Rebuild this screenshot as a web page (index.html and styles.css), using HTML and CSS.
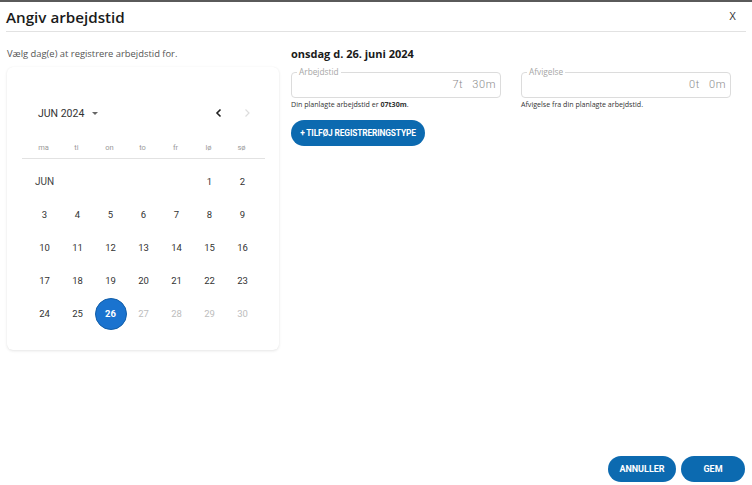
FILE: index.html
```html
<!DOCTYPE html>
<html lang="da">
<head>
<meta charset="utf-8">
<title>Angiv arbejdstid</title>
<link rel="stylesheet" href="styles.css">
</head>
<body>
<div class="dialog">
  <header class="dlg-head">
    <h1 class="title">Angiv arbejdstid</h1>
    <span class="close">X</span>
  </header>
  <main class="content">
    <section class="left">
      <p class="hint">Vælg dag(e) at registrere arbejdstid for.</p>
      <div class="card">
        <div class="cal-head">
          <div class="month">JUN 2024 <span class="caret"></span></div>
          <div class="navs">
            <svg class="nav" width="10" height="10" viewBox="0 0 10 10"><path d="M6.5 1.5 L3 5 L6.5 8.5" fill="none" stroke="#222" stroke-width="1.6"/></svg>
            <svg class="nav" width="10" height="10" viewBox="0 0 10 10"><path d="M3.5 1.5 L7 5 L3.5 8.5" fill="none" stroke="#ddd" stroke-width="1.2"/></svg>
          </div>
        </div>
        <div class="weekdays">
          <span>ma</span><span>ti</span><span>on</span><span>to</span><span>fr</span><span>lø</span><span>sø</span>
        </div>
        <div class="days">
          <span class="mlabel">JUN</span><span></span><span></span><span></span><span></span><span>1</span><span>2</span>
          <span>3</span><span>4</span><span>5</span><span>6</span><span>7</span><span>8</span><span>9</span>
          <span>10</span><span>11</span><span>12</span><span>13</span><span>14</span><span>15</span><span>16</span>
          <span>17</span><span>18</span><span>19</span><span>20</span><span>21</span><span>22</span><span>23</span>
          <span>24</span><span>25</span><span class="sel"><b>26</b></span><span class="dis">27</span><span class="dis">28</span><span class="dis">29</span><span class="dis">30</span>
        </div>
      </div>
    </section>
    <section class="right">
      <h2 class="date">onsdag d. 26. juni 2024</h2>
      <div class="fields">
        <div class="fieldwrap">
          <fieldset class="field">
            <legend>Arbejdstid</legend>
            <span class="val">7t</span><span class="val">30m</span>
          </fieldset>
          <p class="help">Din planlagte arbejdstid er <b>07t30m</b>.</p>
        </div>
        <div class="fieldwrap">
          <fieldset class="field">
            <legend>Afvigelse</legend>
            <span class="val">0t</span><span class="val">0m</span>
          </fieldset>
          <p class="help">Afvigelse fra din planlagte arbejdstid.</p>
        </div>
      </div>
      <button class="btn add">+ TILFØJ REGISTRERINGSTYPE</button>
    </section>
  </main>
  <footer class="actions">
    <button class="btn act cancel">ANNULLER</button>
    <button class="btn act save">GEM</button>
  </footer>
</div>
</body>
</html>
```
FILE: styles.css
```css
html, body { margin: 0; padding: 0; }
body {
  font-family: "Open Sans", "Liberation Sans", sans-serif;
  background: #fff;
  color: #222;
}
.dialog {
  height: 485px;
  box-sizing: border-box;
  border-top: 2px solid #5a5a5a;
  display: flex;
  flex-direction: column;
}
.dlg-head {
  margin: 0 6px 0 6px;
  height: 29px;
  border-bottom: 1px solid #e2e2e2;
  display: flex;
  align-items: center;
  justify-content: space-between;
}
.title {
  margin: 0;
  font-size: 15.2px;
  font-weight: 600;
  color: #1a1a1a;
}
.close {
  font-family: "Liberation Sans", sans-serif;
  font-size: 10px;
  color: #333;
  margin-right: 10px;
}
.content {
  flex: 1;
  display: flex;
  padding: 0 7px;
}
.left { width: 272px; }
.hint {
  margin: 16px 0 0 0;
  font-size: 9.4px;
  line-height: 12px;
  color: #555;
}
.card {
  margin-top: 7px;
  height: 283px;
  box-sizing: border-box;
  border-radius: 6px;
  box-shadow: 0 1px 3px rgba(0,0,0,0.10), 0 0 1px rgba(0,0,0,0.06);
  padding: 38px 14px 0 16px;
  font-family: Roboto, "Liberation Sans", sans-serif;
}
.cal-head {
  display: flex;
  justify-content: space-between;
  align-items: center;
  height: 16px;
  padding: 0 13px 0 15px;
}
.month {
  font-size: 10.5px;
  color: #333;
  display: flex;
  align-items: center;
  gap: 6px;
}
.caret {
  width: 0; height: 0;
  border-left: 3.5px solid transparent;
  border-right: 3.5px solid transparent;
  border-top: 3.5px solid #666;
  margin-left: 2px;
}
.navs { display: flex; gap: 18px; }
.nav { display: block; }
.weekdays {
  margin-top: 21px;
  display: grid;
  grid-template-columns: repeat(7, 33px);
  padding: 0 0 0 5px;
  margin-left: -1px;
  height: 12px;
  font-size: 7.5px;
  color: #9a9a9a;
  text-align: center;
  line-height: 12px;
}
.days {
  border-top: 1px solid #e2e2e2;
  margin-top: 4px;
  margin-left: -1px;
  padding: 6px 0 0 6px;
  display: grid;
  grid-template-columns: repeat(7, 33px);
  grid-auto-rows: 33px;
  font-size: 9.5px;
  color: #333;
  text-align: center;
}
.days span {
  display: flex;
  align-items: center;
  justify-content: center;
}
.days .mlabel { font-size: 10px; color: #444; }
.days .dis { color: #bdbdbd; }
.days .sel b {
  width: 30px; height: 30px;
  border-radius: 50%;
  background: #1a73cf;
  border: 1.5px solid #125ea8;
  color: #fff;
  font-weight: 700;
  display: flex;
  align-items: center;
  justify-content: center;
}
.right { margin-left: 12px; flex: 1; }
.date {
  margin: 14px 0 0 0;
  font-size: 11px;
  font-weight: 700;
  color: #1a1a1a;
  line-height: 16px;
}
.fields { display: flex; gap: 20px; margin-top: 5px; }
.fieldwrap { width: 210px; }
.field {
  margin: 0;
  height: 31px;
  box-sizing: border-box;
  border: 1px solid #dcdcdc;
  border-radius: 4px;
  padding: 0 4px 0 5px;
  display: flex;
  justify-content: flex-end;
  align-items: center;
  gap: 9px;
}
.field legend {
  font-size: 8.3px;
  color: #a6a6a6;
  padding: 0 2px;
  line-height: 10px;
}
.val {
  font-family: Roboto, "Liberation Sans", sans-serif;
  font-size: 11px;
  font-weight: 300;
  color: #8c8c8c;
  position: relative;
  top: -3px;
  letter-spacing: 0.6px;
}
.help {
  margin: 2px 0 0 0;
  font-size: 7.1px;
  color: #333;
  line-height: 9px;
}
.help b { font-weight: 700; }
.btn {
  border: none;
  border-radius: 13px;
  background: #0c6ab0;
  color: #fff;
  font-family: Roboto, "Liberation Sans", sans-serif;
  font-weight: 700;
  height: 26px;
  padding: 0;
  cursor: pointer;
}
.add {
  margin-top: 11px;
  width: 134px;
  font-size: 8.4px;
  letter-spacing: -0.15px;
}
.actions {
  display: flex;
  justify-content: flex-end;
  gap: 5px;
  padding: 0 7px 3px 0;
}
.act { font-size: 9px; }
.cancel { width: 68px; }
.save { width: 64px; }
```
